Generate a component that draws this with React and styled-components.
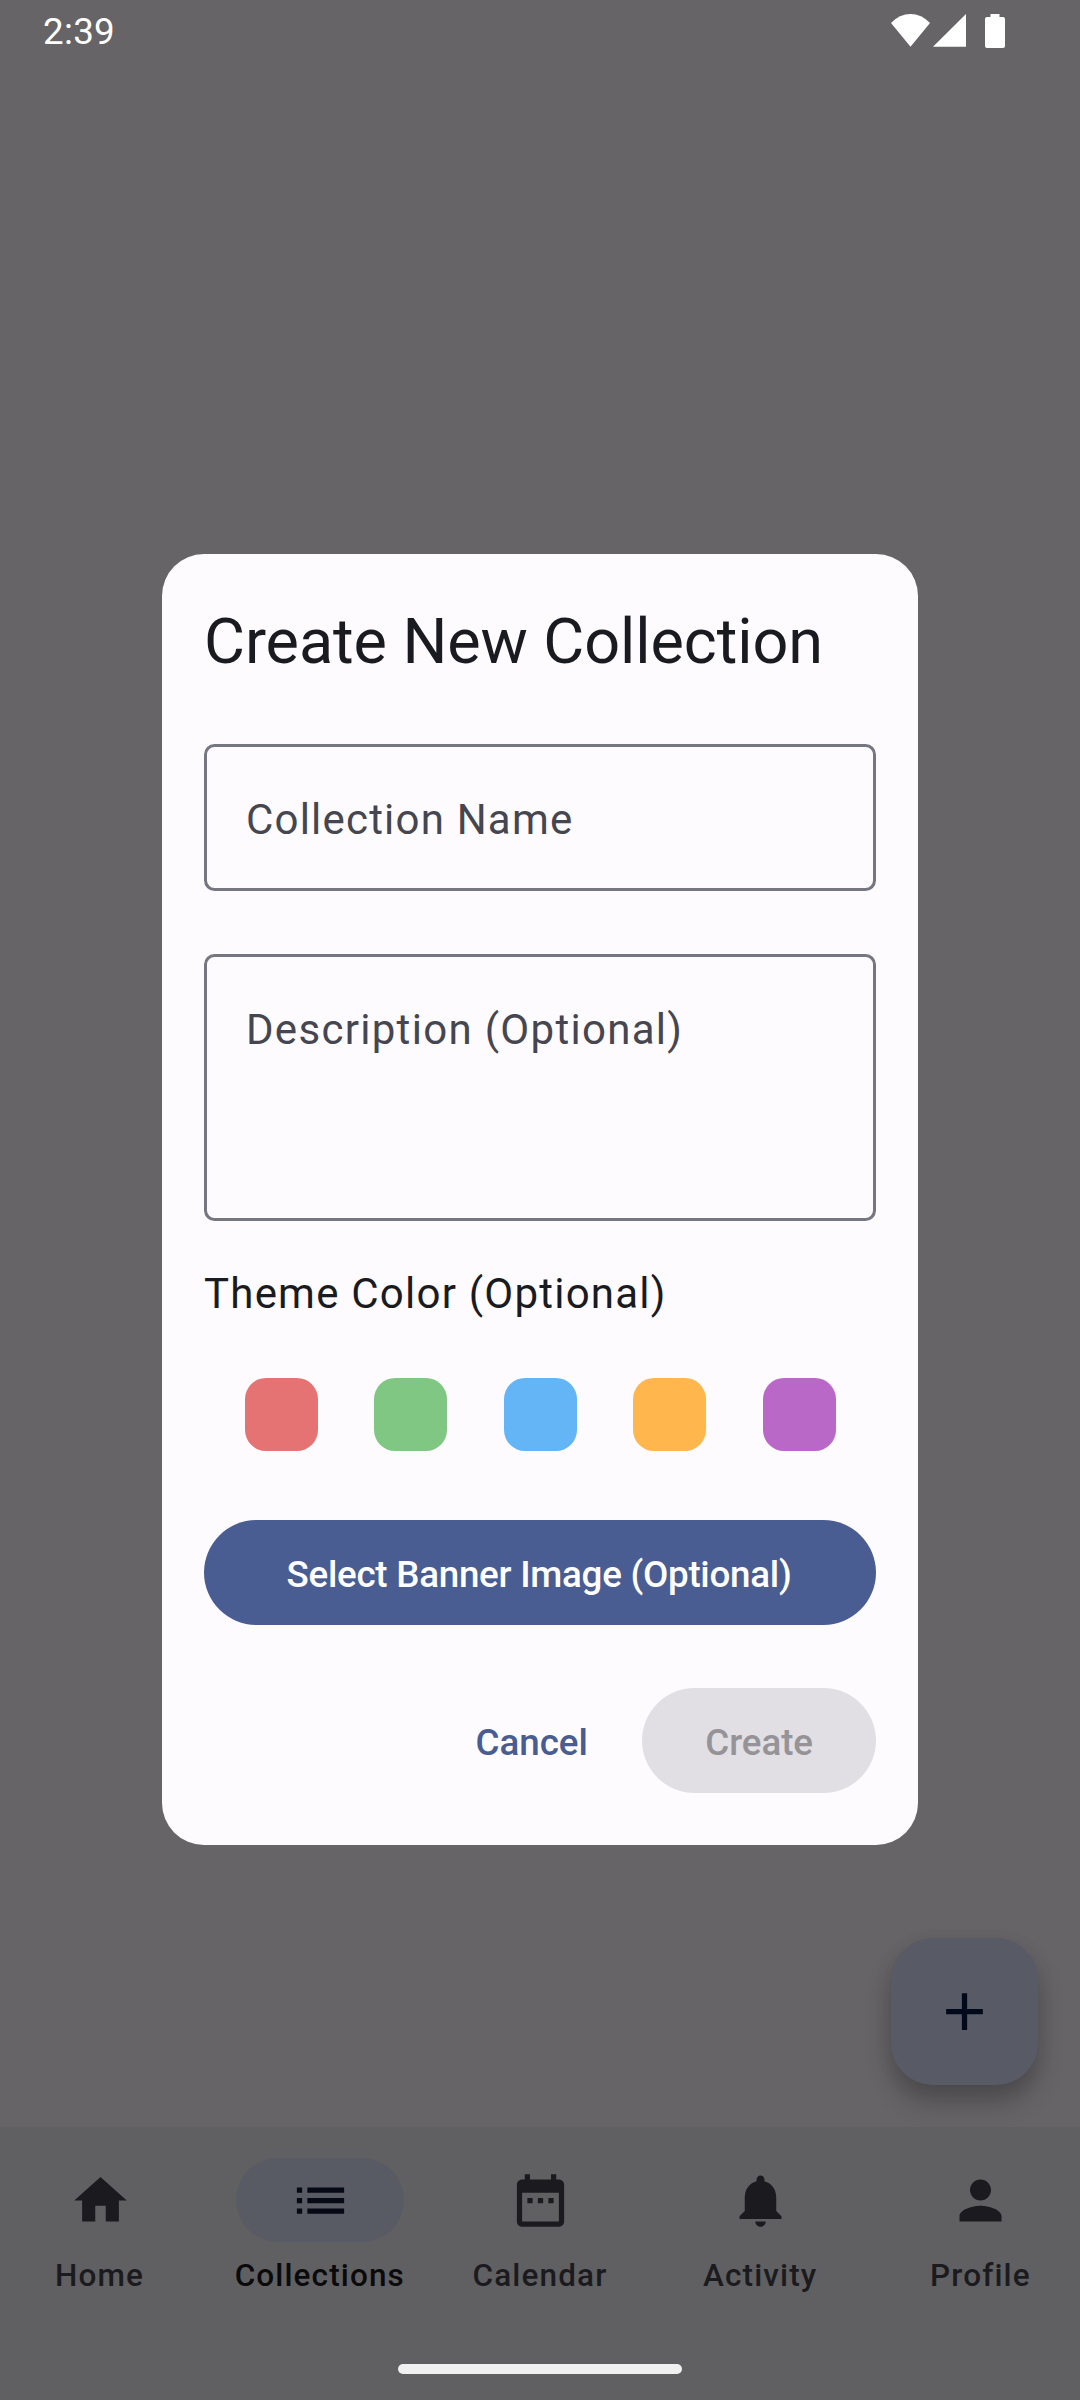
import React from 'react';
import styled, { createGlobalStyle, css } from 'styled-components';

const GlobalStyle = createGlobalStyle`
  * { box-sizing: border-box; }
  body { margin: 0; background: #666466; }
  button { font: inherit; border: 0; padding: 0; }
`;

const Screen = styled.div`
  position: relative;
  display: flex;
  flex-direction: column;
  width: 1080px;
  height: 2400px;
  overflow: hidden;
  background: #666466;
  font-family: Roboto, 'Noto Sans', sans-serif;
`;

const StatusBar = styled.header`
  display: flex;
  justify-content: space-between;
  height: 63px;
  padding: 0 75px 0 43px;
  color: #fff;
`;

const Clock = styled.span`
  font-size: 36.75px;
  line-height: 64px;
  letter-spacing: 0.3px;
`;

const StatusIcons = styled.div`
  display: flex;
  padding-top: 14px;
  svg { display: block; fill: #fff; }
  svg + svg { margin-left: 3px; }
  svg:last-child { margin-left: 19px; }
`;

const Content = styled.main`
  flex: 1;
  display: flex;
  justify-content: flex-end;
  align-items: flex-end;
  padding: 42px;
`;

const Fab = styled.button`
  display: grid;
  place-items: center;
  width: 147px;
  height: 147px;
  border-radius: 42px;
  background: #585a66;
  box-shadow: 0 17px 26px rgba(0, 0, 0, 0.24), 0 4px 20px rgba(0, 0, 0, 0.06);
  color: #000a1a;
`;

const MaterialIcon = styled.svg`
  display: block;
  width: 63px;
  height: 63px;
  fill: currentColor;
`;

const NavBar = styled.nav`
  position: relative;
  display: flex;
  flex-direction: column;
  justify-content: space-between;
  align-items: center;
  height: 273px;
  padding: 31px 0 26px;
  background: #606062;
`;

const NavItems = styled.div`
  display: grid;
  grid-template-columns: repeat(5, 1fr);
  gap: 21px;
  width: 100%;
`;

const NavItem = styled.a`
  display: flex;
  flex-direction: column;
  align-items: center;
  gap: 13px;
  color: ${(p) => (p.$active ? '#0a0a0c' : '#1b1b1f')};
  font-size: 31.5px;
  font-weight: 500;
  line-height: 42px;
  letter-spacing: 1.12px;
`;

const Indicator = styled.span`
  display: grid;
  place-items: center;
  width: 168px;
  height: 84px;
  padding-left: 1px;
  border-radius: 42px;
  ${(p) => p.$active && css`
    background: #585a64;
    color: #060a14;
  `}
`;

const GestureHandle = styled.div`
  width: 284px;
  height: 10px;
  border-radius: 5px;
  background: #f0f0f0;
`;

const Overlay = styled.div`
  position: absolute;
  inset: 0;
  display: flex;
  justify-content: center;
  align-items: flex-start;
  padding-top: 554px;
`;

const Dialog = styled.section`
  display: flex;
  flex-direction: column;
  width: 756px;
  height: 1291px;
  padding: 42px;
  border-radius: 42px;
  background: #fefbff;
  color: #1a1b20;
`;

const Title = styled.h1`
  margin: 0 0 60px;
  padding-top: 4px;
  font-size: 63px;
  font-weight: 400;
  line-height: 84px;
  letter-spacing: -0.1px;
  white-space: nowrap;
`;

const Field = styled.div`
  height: ${(p) => p.$height}px;
  margin-bottom: ${(p) => p.$after}px;
  padding: 41px 39px 0;
  border: 3px solid #757680;
  border-radius: 10.5px;
  color: #45464f;
  font-size: 42px;
  line-height: 63px;
  letter-spacing: ${(p) => p.$tracking}px;
`;

const SectionLabel = styled.p`
  margin: -1px 0 53px;
  font-size: 42px;
  line-height: 63px;
  letter-spacing: 1.22px;
`;

const Swatches = styled.div`
  display: flex;
  justify-content: space-between;
  padding: 0 40px 0 40.8px;
  margin-bottom: 69px;
`;

const Swatch = styled.span`
  width: 73px;
  height: 73px;
  border-radius: 21px;
  background: ${(p) => p.$color};
`;

const Button = styled.button`
  height: 105px;
  padding: 4px ${(p) => p.$pad}px 0;
  border-radius: 52.5px;
  font-size: 36.75px;
  font-weight: 500;
  line-height: 52px;
  letter-spacing: ${(p) => p.$tracking}px;
  white-space: nowrap;
  background: ${(p) => p.$bg || 'transparent'};
  color: ${(p) => p.$fg};
`;

const BannerButton = styled(Button)`
  padding-right: 2px;
`;

const Actions = styled.div`
  display: flex;
  justify-content: flex-end;
  gap: 23px;
  margin-top: 63px;
`;

const COLORS = ['#e57373', '#81c784', '#64b5f6', '#ffb74d', '#ba68c8'];

const NAV = [
  { label: 'Home', d: 'M10 20v-6h4v6h5v-8h3L12 3 2 12h3v8z' },
  { label: 'Collections', active: true, d: 'M3 13h2v-2H3v2zm0 4h2v-2H3v2zm0-8h2V7H3v2zm4 4h14v-2H7v2zm0 4h14v-2H7v2zM7 7v2h14V7H7z' },
  { label: 'Calendar', d: 'M9 11H7v2h2v-2zm4 0h-2v2h2v-2zm4 0h-2v2h2v-2zm2-7h-1V2h-2v2H8V2H6v2H5c-1.11 0-1.99.9-1.99 2L3 20c0 1.1.89 2 2 2h14c1.1 0 2-.9 2-2V6c0-1.1-.9-2-2-2zm0 16H5V9h14v11z' },
  { label: 'Activity', d: 'M12 22c1.1 0 2-.9 2-2h-4c0 1.1.89 2 2 2zm6-6v-5c0-3.07-1.64-5.64-4.5-6.32V4c0-.83-.67-1.5-1.5-1.5s-1.5.67-1.5 1.5v.68C7.63 5.36 6 7.92 6 11v5l-2 2v1h16v-1l-2-2z' },
  { label: 'Profile', d: 'M12 12c2.21 0 4-1.79 4-4s-1.79-4-4-4-4 1.79-4 4 1.79 4 4 4zm0 2c-2.67 0-8 1.34-8 4v2h16v-2c0-2.66-5.33-4-8-4z' },
];

const Icon = ({ d }) => (
  <MaterialIcon viewBox="0 0 24 24"><path d={d} /></MaterialIcon>
);

export default function App() {
  return (
    <Screen>
      <GlobalStyle />
      <StatusBar>
        <Clock>2:39</Clock>
        <StatusIcons>
          <svg width="39" height="33" viewBox="0 0 39 33"><path d="M19.5 32.7 0 9Q8.5 0 19.5 0T39 9z" /></svg>
          <svg width="33" height="33" viewBox="0 0 33 33"><path d="M33 0v32.8H0z" /></svg>
          <svg width="20" height="34" viewBox="0 0 20 34"><path d="M5.5 0h9v3H18a2 2 0 0 1 2 2v27a2 2 0 0 1-2 2H2a2 2 0 0 1-2-2V5a2 2 0 0 1 2-2h3.5z" /></svg>
        </StatusIcons>
      </StatusBar>
      <Content>
        <Fab aria-label="Add"><Icon d="M19 13h-6v6h-2v-6H5v-2h6V5h2v6h6v2z" /></Fab>
      </Content>
      <NavBar>
        <NavItems>
          {NAV.map(({ label, active, d }) => (
            <NavItem key={label} $active={active}>
              <Indicator $active={active}><Icon d={d} /></Indicator>
              {label}
            </NavItem>
          ))}
        </NavItems>
        <GestureHandle />
      </NavBar>
      <Overlay>
        <Dialog>
          <Title>Create New Collection</Title>
          <Field $height={147} $after={63} $tracking={1.2}>Collection Name</Field>
          <Field $height={267} $after={42} $tracking={1.3}>Description (Optional)</Field>
          <SectionLabel>Theme Color (Optional)</SectionLabel>
          <Swatches>
            {COLORS.map((c) => <Swatch key={c} $color={c} />)}
          </Swatches>
          <BannerButton $bg="#495d92" $fg="#fff" $pad={0} $tracking={-0.26}>Select Banner Image (Optional)</BannerButton>
          <Actions>
            <Button $fg="#495d92" $pad={31.5} $tracking={-0.05}>Cancel</Button>
            <Button $bg="#e1dfe3" $fg="#959398" $pad={63} $tracking={-0.05}>Create</Button>
          </Actions>
        </Dialog>
      </Overlay>
    </Screen>
  );
}
